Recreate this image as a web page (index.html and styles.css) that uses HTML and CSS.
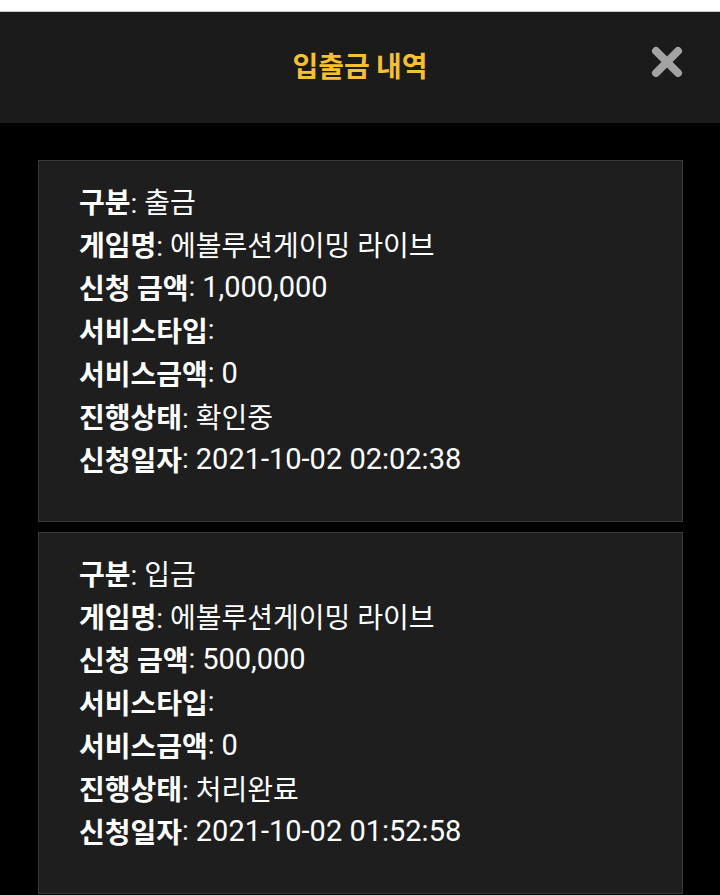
FILE: index.html
```html
<!DOCTYPE html>
<html>
  <head>
    <meta charset="UTF-8" />
    <title>입출금 내역</title>
    <link rel="stylesheet" href="styles.css">
  </head>
  <body>
    <div class="topbar"></div>
    <header class="head">
      <h1 class="title">입출금 내역</h1>
      <a href="#" class="close">
        <svg width="34" height="34" viewBox="0 0 34 34">
          <path d="M6 6 L28 28 M28 6 L6 28" stroke="#a3a3a3" stroke-width="8" stroke-linecap="round" />
        </svg>
      </a>
    </header>
    <main class="list">
      <div class="card">
        <p><b>구분</b>: 출금</p>
        <p><b>게임명</b>: 에볼루션게이밍 라이브</p>
        <p><b>신청 금액</b>: <span class="num">1,000,000</span></p>
        <p><b>서비스타입</b>:</p>
        <p><b>서비스금액</b>: <span class="num">0</span></p>
        <p><b>진행상태</b>: 확인중</p>
        <p><b>신청일자</b>: <span class="num">2021-10-02 02:02:38</span></p>
      </div>
      <div class="card">
        <p><b>구분</b>: 입금</p>
        <p><b>게임명</b>: 에볼루션게이밍 라이브</p>
        <p><b>신청 금액</b>: <span class="num">500,000</span></p>
        <p><b>서비스타입</b>:</p>
        <p><b>서비스금액</b>: <span class="num">0</span></p>
        <p><b>진행상태</b>: 처리완료</p>
        <p><b>신청일자</b>: <span class="num">2021-10-02 01:52:58</span></p>
      </div>
    </main>
  </body>
</html>
```
FILE: styles.css
```css
* {
  margin: 0;
  padding: 0;
  box-sizing: border-box;
}
body {
  background: #000;
  font-family: Roboto, 'Noto Sans CJK KR', sans-serif;
  color: #fff;
}
.topbar {
  height: 12px;
  background: #fff;
  border-bottom: 1px solid #c8c8c8;
}
.head {
  position: relative;
  height: 111px;
  background: #1b1b1b;
  display: flex;
  align-items: center;
  justify-content: center;
}
.title {
  font-family: 'Noto Sans CJK KR', sans-serif;
  font-size: 28px;
  font-weight: 700;
  line-height: 1;
  margin-top: -6px;
  color: #f5c032;
}
.close {
  position: absolute;
  right: 36px;
  top: 33px;
  display: block;
  line-height: 0;
}
.list {
  padding: 37px 37px 0 38px;
  display: flex;
  flex-direction: column;
  gap: 10px;
}
.card {
  background: #1e1e1e;
  border: 1px solid #3a3a3a;
  padding: 18px 40px 41px;
}
.card p {
  display: flex;
  align-items: center;
  height: 43px;
  font-size: 28px;
  white-space: pre;
}
.card b {
  font-family: 'Noto Sans CJK KR', sans-serif;
  font-weight: 700;
}
.card .num {
  font-size: 29px;
}
```
